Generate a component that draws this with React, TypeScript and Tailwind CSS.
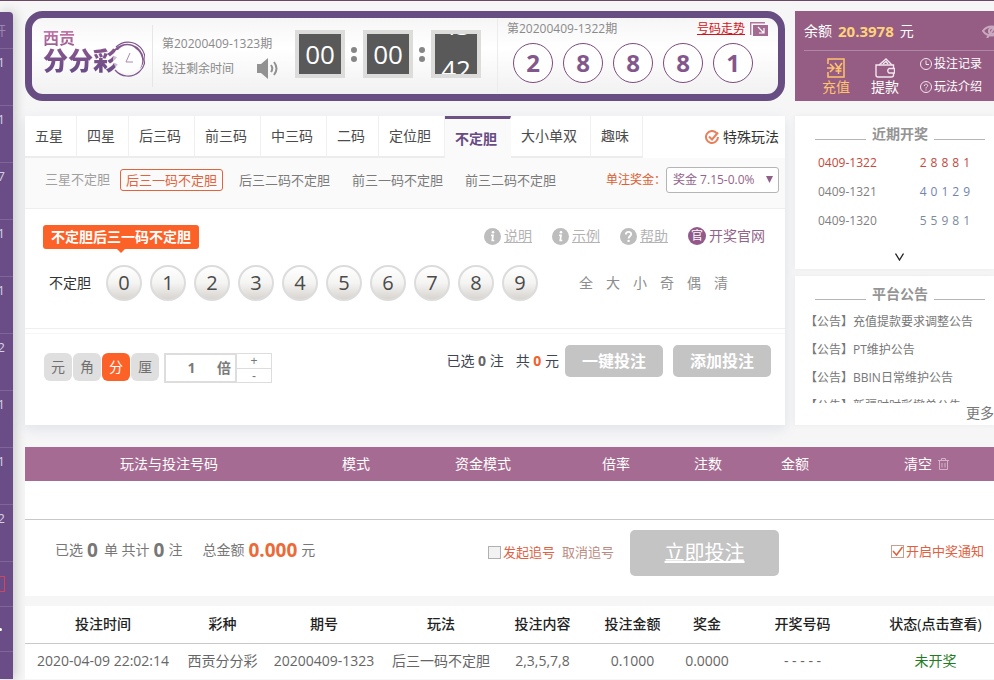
import React, { useState } from "react";
import clsx from "clsx";

const SIDE_ITEMS = ["1", "1", "7", "1", "1", "2", "1", "1", "2"];
const TABS = ["五星", "四星", "后三码", "前三码", "中三码", "二码", "定位胆", "不定胆", "大小单双", "趣味"];
const SUB_TABS = ["后三一码不定胆", "后三二码不定胆", "前三一码不定胆", "前三二码不定胆"];
const UNITS = ["元", "角", "分", "厘"];
const RECENT = [
  { issue: "0409-1322", code: "28881", issueColor: "text-[#c4493a]", codeColor: "text-[#c4493a]" },
  { issue: "0409-1321", code: "40129", issueColor: "text-[#808080]", codeColor: "text-[#7284ad]" },
  { issue: "0409-1320", code: "55981", issueColor: "text-[#808080]", codeColor: "text-[#7b8a9c]" },
];
const NOTICES = ["充值提款要求调整公告", "PT维护公告", "BBIN日常维护公告", "新疆时时彩撤单公告"];
const CART_COLS = [
  { label: "玩法与投注号码", width: "w-[288px]" },
  { label: "模式", width: "w-[86px]" },
  { label: "资金模式", width: "w-[168px]" },
  { label: "倍率", width: "w-[98px]" },
  { label: "注数", width: "w-[86px]" },
  { label: "金额", width: "w-[88px]" },
];
const ORDER_COLS = [
  { label: "投注时间", value: "2020-04-09 22:02:14", width: "w-[156px]" },
  { label: "彩种", value: "西贡分分彩", width: "w-[83px]" },
  { label: "期号", value: "20200409-1323", width: "w-[120px]" },
  { label: "玩法", value: "后三一码不定胆", width: "w-[114px]" },
  { label: "投注内容", value: "2,3,5,7,8", width: "w-[89px]" },
  { label: "投注金额", value: "0.1000", width: "w-[91px]" },
  { label: "奖金", value: "0.0000", width: "w-[58px]" },
  { label: "开奖号码", value: "- - - - -", width: "w-[133px]" },
];

const Sidebar = () => (
  <aside className="mt-[11px] flex w-[13px] shrink-0 flex-col overflow-hidden rounded-tr bg-[#6a4d86] text-[13px] text-[#d9cfe2] shadow-[2px_0_12px_rgba(0,0,0,0.2)]">
    <div className="flex h-[37px] items-center justify-end border-b border-[#7f6598] pr-[7px] text-[#9b86ae]">
      <span>开</span>
    </div>
    {SIDE_ITEMS.map((n, i) => (
      <div key={i} className="flex h-[57px] justify-end border-b border-[#7f6598] pt-[3px] pr-2">
        <span>{n}</span>
      </div>
    ))}
    <div className="flex h-[45px] items-center justify-end border-b border-[#7f6598] pr-2">
      <span className="h-4 w-6 shrink-0 border border-[#d8405e]" />
    </div>
    <div className="flex h-[45px] items-center justify-end border-b border-[#7f6598] pr-[11px]">
      <span className="size-[3px] shrink-0 rounded-full bg-white" />
    </div>
  </aside>
);

const Logo = () => (
  <div className="relative flex h-[50px] w-[104px] shrink-0 flex-col">
    <span className="bg-gradient-to-b from-[#c877a8] to-[#9a5c94] bg-clip-text text-[16px] leading-4 font-bold text-transparent">
      西贡
    </span>
    <span className="bg-gradient-to-b from-[#8b568f] to-[#674b86] bg-clip-text text-[25px] leading-7 font-black text-transparent">
      分分彩
    </span>
    <svg className="absolute top-[11px] right-[2px] h-9 w-9" viewBox="0 0 36 36" fill="none">
      <circle cx="18" cy="18" r="14" fill="#fff" fillOpacity="0.6" />
      <path d="M7 6A17 17 0 1 1 6 29" stroke="#7d5690" strokeWidth="1.2" />
      <path d="M5 9A17 17 0 0 1 35 18A17 17 0 0 1 31 28A15 15 0 0 0 27 8C21 2 13 4 9 9Z" fill="#85588f" />
      <path d="M21 12L17 21H24" stroke="#a98bb4" strokeWidth="1" />
    </svg>
  </div>
);

const TimeBox = ({ children }: { children: React.ReactNode }) => (
  <div className="relative flex h-12 w-[50px] items-center justify-center overflow-hidden border-4 border-[#dcdcdb] bg-[#595959] text-[26px] text-white">
    {children}
  </div>
);

const Dots = () => (
  <div className="flex w-[18px] flex-col items-center gap-[3px]">
    <span className="size-[6px] rounded-full bg-[#868686]" />
    <span className="size-[6px] rounded-full bg-[#868686]" />
  </div>
);

const Header = () => (
  <header className="flex h-[90px] items-start rounded-[18px] border-[7px] border-[#674d81] bg-gradient-to-b from-[#f6f6f6] via-white via-40% to-[#f1f1f1] pl-[11px] text-[12px] text-[#8a8a8a]">
    <div className="pt-3">
      <Logo />
    </div>
    <div className="ml-[5px] flex h-[62px] w-[143px] flex-col gap-1 self-center border-l border-[#e6e6e6] pt-[9px] pl-[9px]">
      <div className="leading-5">第20200409-1323期</div>
      <div className="flex items-center gap-[23px] leading-5">
        <span>投注剩余时间</span>
        <svg className="h-[21px] w-[22px]" viewBox="0 0 22 21">
          <path d="M0 6H4L11 0V21L4 15H0Z" fill="#929292" />
          <path d="M14 7Q16.500 10.500 14 14M17 4Q22 10.500 17 17" fill="none" stroke="#929292" strokeWidth="2" />
        </svg>
      </div>
    </div>
    <div className="flex items-center pt-3">
      <TimeBox>00</TimeBox>
      <Dots />
      <TimeBox>00</TimeBox>
      <Dots />
      <TimeBox>
        <div className="absolute -top-[31px] leading-[44px]">
          <div>43</div>
          <div>42</div>
        </div>
      </TimeBox>
    </div>
    <div className="ml-4 flex min-w-0 flex-1 flex-col self-stretch border-l border-[#ececec] pr-[10px] pl-[9px]">
      <div className="flex items-center pt-px">
        <span className="leading-5">第20200409-1322期</span>
        <a href="#trend" className="ml-auto leading-5 text-[#d4141c] underline">
          号码走势
        </a>
        <svg className="ml-[5px] h-[15px] w-[18px]" viewBox="0 0 18 15">
          <path d="M.7 13V.7H15" fill="none" stroke="#b0789c" strokeWidth="1.400" />
          <path d="M3 3H18V14H3Z" fill="#a56a92" />
          <path d="M8 5L14 11M14 6V11H9" fill="none" stroke="#fff" strokeWidth="1.200" />
        </svg>
      </div>
      <div className="mt-1 flex gap-[10px] pl-[6px]">
        {["2", "8", "8", "8", "1"].map((n, i) => (
          <span
            key={i}
            className="flex size-10 items-center justify-center rounded-full border border-[#7c4a7e] bg-white text-[24px] font-bold text-[#83578c]"
          >
            {n}
          </span>
        ))}
      </div>
    </div>
  </header>
);

const InfoIcon = ({ mark }: { mark: "i" | "?" }) => (
  <svg className="size-[17px]" viewBox="0 0 17 17" fill="none">
    <circle cx="8.500" cy="8.500" r="8.500" fill="#bdbdbd" />
    {mark === "i" ? (
      <>
        <circle cx="9" cy="4.300" r="1.300" fill="#fff" />
        <path d="M7 7.300H9L8.300 12.500H10.300" stroke="#fff" strokeWidth="1.700" />
      </>
    ) : (
      <>
        <path d="M5.800 6.500C5.800 3 11.300 3.200 11.200 6.200C11.100 8 8.600 8 8.600 10.500" stroke="#fff" strokeWidth="1.800" />
        <circle cx="8.600" cy="12.900" r="1.200" fill="#fff" />
      </>
    )}
  </svg>
);

const HelpLink = ({ mark, label }: { mark: "i" | "?"; label: string }) => (
  <a href="#help" className="flex items-center gap-[3px] text-[#b3b3b3] underline">
    <InfoIcon mark={mark} />
    {label}
  </a>
);

const BetPanel = () => {
  const [tab, setTab] = useState("不定胆");
  const [sub, setSub] = useState(SUB_TABS[0]);
  const [unit, setUnit] = useState("分");
  const [times, setTimes] = useState(1);

  return (
    <section className="mt-[15px] flex h-[309px] flex-col bg-white shadow-[0_4px_12px_rgba(120,140,170,0.18)]">
      <div className="flex h-[42px] bg-white">
        {TABS.map((t) => (
          <button
            key={t}
            onClick={() => setTab(t)}
            className={clsx(
              "border-r pr-[13px] pl-[10px] whitespace-nowrap",
              t === tab
                ? "border-t-[3px] border-t-[#6c5283] border-r-[#fafafa] bg-[#fafafa] font-bold text-[#674b84]"
                : "border-b-2 border-r-[#f0f0f0] border-b-[#ececec] text-[#4c4c4c]",
            )}
          >
            {t}
          </button>
        ))}
        <a href="#special" className="ml-auto flex items-center gap-1 pr-[6px] text-[#333]">
          <svg className="size-[14px]" viewBox="0 0 14 14" fill="none">
            <path d="M11.500 3A6 6 0 1 0 13 7" stroke="#e8805c" strokeWidth="2" />
            <path d="M4 6.500L7 9.500L13 2.500" stroke="#e8805c" strokeWidth="2" />
          </svg>
          特殊玩法
        </a>
      </div>

      <div className="flex h-[51px] items-start gap-[10px] border-b border-[#eee] bg-[#fafafa] pt-[9px] pr-[6px] pl-5 text-[13px]">
        <span className="leading-6 text-[#a0a0a0]">三星不定胆</span>
        {SUB_TABS.map((s) => (
          <button
            key={s}
            onClick={() => setSub(s)}
            className={clsx(
              "mt-[2px] h-[22px] rounded-[3px] border px-[5px] leading-5 whitespace-nowrap",
              s === sub ? "border-[#e0643c] text-[#e0643c]" : "border-transparent text-[#7b7b7b]",
            )}
          >
            {s}
          </button>
        ))}
        <div className="ml-auto flex items-center text-[12px]">
          <label htmlFor="bonus" className="text-[#dc5e33]">
            单注奖金：
          </label>
          <div className="relative">
            <select
              id="bonus"
              className="h-[26px] w-[113px] appearance-none rounded-[3px] border border-[#b5b5b5] bg-white pl-[6px] text-[12px] text-[#93648a]"
            >
              <option>奖金 7.15-0.0%</option>
            </select>
            <svg className="pointer-events-none absolute top-[9px] right-[6px] h-[7px] w-[7px]" viewBox="0 0 7 7">
              <path d="M0 0H7L3.500 7Z" fill="#8f5f87" />
            </svg>
          </div>
        </div>
      </div>

      <div className="flex h-[120px] flex-col border-b border-[#efefef] pt-4 pr-5 pl-[18px]">
        <div className="flex items-start">
          <div className="relative h-6 rounded-[3px] bg-[#fc6128] px-2 leading-6 font-bold text-white">
            不定胆后三一码不定胆
            <svg className="absolute top-6 left-1/2 -ml-1 h-1 w-2" viewBox="0 0 8 4">
              <path d="M0 0H8L4 4Z" fill="#fc6128" />
            </svg>
          </div>
          <div className="ml-auto flex h-[22px] items-center gap-5">
            <HelpLink mark="i" label="说明" />
            <HelpLink mark="i" label="示例" />
            <HelpLink mark="?" label="帮助" />
            <a href="#official" className="flex items-center gap-[3px] text-[#93648a]">
              <span className="flex size-[18px] items-center justify-center rounded-full bg-[#93598a] text-[12px] leading-none text-white">
                官
              </span>
              开奖官网
            </a>
          </div>
        </div>
        <div className="mt-4 flex items-center pl-[6px]">
          <span className="text-[#333]">不定胆</span>
          <div className="ml-[15px] flex gap-2">
            {Array.from({ length: 10 }, (_, n) => (
              <button
                key={n}
                className="size-9 rounded-full border-2 border-[#dcdcdc] bg-gradient-to-b from-white via-[#f4f4f3] to-[#d9d5d0] text-[20px] leading-8 text-[#4a4a4a]"
              >
                {n}
              </button>
            ))}
          </div>
          <div className="ml-[41px] flex gap-[13px] text-[#8d8d8d]">
            {["全", "大", "小", "奇", "偶", "清"].map((k) => (
              <button key={k}>{k}</button>
            ))}
          </div>
        </div>
      </div>

      <div className="mt-1 flex flex-1 items-start border-t border-[#f6f6f6] pt-[11px] pr-[14px] pl-[19px]">
        <div className="flex pt-2">
          <div className="flex gap-px">
            {UNITS.map((u) => (
              <button
                key={u}
                onClick={() => setUnit(u)}
                className={clsx(
                  "size-7 rounded-md",
                  u === unit ? "bg-[#fc6128] text-white" : "bg-[#dfdfdf] text-[#707070]",
                )}
              >
                {u}
              </button>
            ))}
          </div>
          <label className="ml-[5px] flex h-[30px] w-[73px] items-center border-2 border-[#ddd] pr-1 font-bold text-[#7a7a7a]">
            <input
              value={times}
              onChange={(e) => setTimes(Number(e.target.value) || 1)}
              className="w-full min-w-0 text-center outline-none"
            />
            <span className="shrink-0">倍</span>
          </label>
          <div className="flex h-[30px] w-[35px] flex-col border border-l-0 border-[#ddd] font-['Liberation_Sans',sans-serif] text-[12px] leading-[14px] text-[#777]">
            <button className="flex-1 border-b border-[#ddd]" onClick={() => setTimes(times + 1)}>
              +
            </button>
            <button className="flex-1" onClick={() => setTimes(Math.max(1, times - 1))}>
              -
            </button>
          </div>
        </div>
        <div className="ml-auto flex items-center">
          <span className="mr-[6px] text-[#3d4652]">
            已选 <b className="text-[#666]">0</b> 注
            <span className="ml-3">
              共 <b className="text-[#f2602f]">0</b> 元
            </span>
          </span>
          <button className="h-8 w-[98px] rounded-[5px] bg-[#c4c4c4] text-[16px] font-bold text-white">一键投注</button>
          <button className="ml-[10px] h-8 w-[98px] rounded-[5px] bg-[#c4c4c4] text-[16px] font-bold text-white">
            添加投注
          </button>
        </div>
      </div>
    </section>
  );
};

const Account = () => (
  <section className="h-[90px] overflow-hidden bg-[#955d83] pl-[9px] text-white">
    <div className="flex h-10 items-center border-b border-[#b088a3]">
      <span>余额</span>
      <b className="ml-[6px] text-[15px] text-[#ffd27c]">20.3978</b>
      <span className="ml-[6px]">元</span>
      <svg className="-mr-2 ml-auto h-[14px] w-5 shrink-0" viewBox="0 0 20 14" fill="none" stroke="#c9a9bf">
        <path d="M1 7C5 1 15 1 19 7C15 13 5 13 1 7Z" strokeWidth="2" />
        <circle cx="10" cy="7" r="3" strokeWidth="2" />
        <path d="M15 0L5 14" strokeWidth="2" />
      </svg>
    </div>
    <div className="flex pt-[7px]">
      <a href="#deposit" className="ml-[18px] flex flex-col items-center leading-[17px] text-[#ffc36e]">
        <svg className="h-5 w-[18px]" viewBox="0 0 18 20" fill="none" stroke="#ffc36e" strokeWidth="1.500">
          <path d="M1 6V1H17V19H1V14" />
          <path d="M0 10H6M3 6L7 10L3 14M8 5L11.500 10L15 5M11.500 10V16M8.500 10.500H14.500M8.500 13H14.500" />
        </svg>
        充值
      </a>
      <a href="#withdraw" className="ml-[21px] flex flex-col items-center leading-[17px]">
        <svg className="h-5 w-5" viewBox="0 0 20 20" fill="none" stroke="#f3e6ef" strokeWidth="1.400">
          <path d="M18.500 10V7H1V17Q1 19 3 19H16.500Q18.500 19 18.500 17V15" />
          <path d="M4 7L11 1L17 7M8 6L11 3.500L13 6" />
          <path d="M19.500 10.500H14Q11.500 12.500 14 15H19.500Z" />
        </svg>
        提款
      </a>
      <div className="-mt-1 ml-[21px] flex flex-col gap-[3px] text-[12px] leading-5">
        <a href="#records" className="flex items-center gap-[2px] whitespace-nowrap">
          <svg className="size-3" viewBox="0 0 12 12" fill="none" stroke="#f3e6ef">
            <circle cx="6" cy="6" r="5.500" />
            <path d="M6 2.500V6.500H9" />
          </svg>
          投注记录
        </a>
        <a href="#rules" className="flex items-center gap-[2px] whitespace-nowrap">
          <svg className="size-3" viewBox="0 0 12 12" fill="none" stroke="#f3e6ef">
            <circle cx="6" cy="6" r="5.500" />
            <path d="M4.300 5C4.300 2.500 7.800 2.800 7.700 4.700C7.600 5.800 6 5.800 6 7.500M6 8.500V9.500" />
          </svg>
          玩法介绍
        </a>
      </div>
    </div>
  </section>
);

const PanelTitle = ({ children }: { children: React.ReactNode }) => (
  <h2 className="flex h-8 items-end gap-[6px] pr-[9px] pl-5 text-[14px] font-bold whitespace-nowrap text-[#949494]">
    <span className="mb-2 h-px flex-1 bg-[#b5b5b5]" />
    <span className="pb-1">{children}</span>
    <span className="mb-2 h-px flex-1 bg-[#b5b5b5]" />
  </h2>
);

const Aside = () => (
  <div className="flex w-[199px] shrink-0 flex-col">
    <Account />
    <section className="mt-[15px] flex h-[153px] flex-col bg-white text-[12px] shadow-[0_0_6px_rgba(0,0,0,0.05)]">
      <PanelTitle>近期开奖</PanelTitle>
      <ul className="flex flex-col pr-6 pl-[23px] leading-[29px]">
        {RECENT.map((r) => (
          <li key={r.issue} className="flex justify-between">
            <span className={r.issueColor}>{r.issue}</span>
            <span className={clsx("flex gap-1", r.codeColor)}>
              {r.code.split("").map((c, i) => (
                <span key={i}>{c}</span>
              ))}
            </span>
          </li>
        ))}
      </ul>
      <button aria-label="展开" className="mt-[18px] self-center pl-[10px]">
        <svg className="h-2 w-[9px]" viewBox="0 0 9 8" fill="none">
          <path d="M.5 .5L4.500 7L8.500 .5" stroke="#222" strokeWidth="1.300" />
        </svg>
      </button>
    </section>
    <section className="mt-[7px] flex h-[149px] flex-col bg-white shadow-[0_0_6px_rgba(0,0,0,0.05)]">
      <PanelTitle>平台公告</PanelTitle>
      <ul className="h-[95px] overflow-hidden pl-[10px] text-[12px] leading-7 text-[#777]">
        {NOTICES.map((n) => (
          <li key={n} className="whitespace-nowrap">
            【公告】{n}
          </li>
        ))}
      </ul>
      <a href="#more" className="self-end leading-5 text-[#777]">
        更多
      </a>
    </section>
  </div>
);

const CheckBox = ({ id, label, defaultChecked }: { id: string; label: string; defaultChecked?: boolean }) => (
  <span className="relative flex items-center gap-[2px]">
    <input
      id={id}
      type="checkbox"
      defaultChecked={defaultChecked}
      className="peer size-[13px] appearance-none border border-[#b0b0b0] bg-[#f2f2f2] checked:border-[#c9a090] checked:bg-white"
    />
    <svg className="pointer-events-none absolute left-0 hidden size-[13px] peer-checked:block" viewBox="0 0 13 13" fill="none">
      <path d="M2 6L5.500 10L11.500 2" stroke="#e0603a" strokeWidth="1.500" />
    </svg>
    <label htmlFor={id} className="text-[#e0603f]">
      {label}
    </label>
  </span>
);

const Cart = () => (
  <section className="mt-[22px] bg-white">
    <table className="w-full table-fixed bg-[#a66b92] text-white">
      <thead>
        <tr className="h-[34px]">
          {CART_COLS.map((c) => (
            <th key={c.label} className={clsx("font-normal", c.width)}>
              {c.label}
            </th>
          ))}
          <th className="pl-5 font-normal">
            <button className="inline-flex items-center gap-[6px]">
              清空
              <svg className="h-3 w-[11px]" viewBox="0 0 11 12" fill="none" stroke="#d4b3c8">
                <path d="M0 2.500H11M3.500 2.500V.5H7.500V2.500M1.500 2.500V11.500H9.500V2.500M4 5V9.500M7 5V9.500" />
              </svg>
            </button>
          </th>
        </tr>
      </thead>
    </table>
    <div className="h-[39px] border-b border-[#c8c8c8]" />
    <div className="flex h-[76px] items-start pt-[10px] pr-[10px] pl-[30px] text-[#777]">
      <div className="flex h-10 items-center gap-1 whitespace-nowrap">
        <span>已选</span>
        <b className="text-[19px]">0</b>
        <span className="ml-[2px]">单 共计</span>
        <b className="text-[19px]">0</b>
        <span>注</span>
        <span className="ml-4">总金额</span>
        <b className="text-[19px] text-[#ec6a38]">0.000</b>
        <span>元</span>
      </div>
      <div className="mr-4 ml-auto flex h-11 items-center gap-[7px] text-[13px]">
        <CheckBox id="chase" label="发起追号" />
        <button className="text-[#bd8a80]">取消追号</button>
      </div>
      <button className="h-[46px] w-[149px] rounded-[5px] bg-[#c4c4c4] text-[20px] text-white underline">立即投注</button>
      <div className="ml-28 flex h-[42px] items-center text-[13px]">
        <CheckBox id="notify" label="开启中奖通知" defaultChecked />
      </div>
    </div>
  </section>
);

const Orders = () => (
  <table className="mt-[10px] w-full table-fixed bg-white text-center whitespace-nowrap">
    <thead>
      <tr className="h-[37px] border-b border-[#c8c8c8] text-[#222]">
        {ORDER_COLS.map((c) => (
          <th key={c.label} className={clsx("p-0 text-center font-medium", c.width)}>
            {c.label}
          </th>
        ))}
        <th className="p-0 pl-2 text-center font-medium">状态(点击查看)</th>
      </tr>
    </thead>
    <tbody>
      <tr className="h-9 text-[#666]">
        {ORDER_COLS.map((c) => (
          <td key={c.label} className="p-0">
            {c.value}
          </td>
        ))}
        <td className="p-0 pl-2">
          <a href="#order" className="text-[#1f7d1f]">
            未开奖
          </a>
        </td>
      </tr>
    </tbody>
  </table>
);

export default function App() {
  return (
    <div className="min-h-screen overflow-hidden border-t border-[#6b4766] bg-[#f6f6f7] font-['Open_Sans','Noto_Sans_CJK_SC',sans-serif] text-[14px] leading-5">
      <div className="flex">
        <Sidebar />
        <main className="ml-3 min-w-0 flex-1 pt-[10px]">
          <div className="flex gap-[10px]">
            <div className="min-w-0 flex-1">
              <Header />
              <BetPanel />
            </div>
            <Aside />
          </div>
          <Cart />
          <Orders />
        </main>
      </div>
    </div>
  );
}
